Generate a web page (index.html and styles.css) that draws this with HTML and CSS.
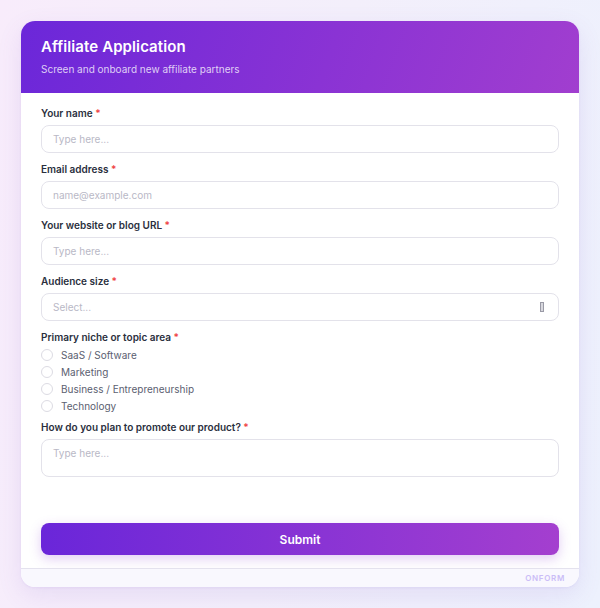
FILE: index.html
```html
<!DOCTYPE html>
<html>
<head>
<meta charset="utf-8">
<link rel="stylesheet" href="styles.css">
</head>
<body>
<div class="card">
  <div class="header">
    <h1 class="title">Affiliate Application</h1>
    <p class="subtitle">Screen and onboard new affiliate partners</p>
  </div>
  <form class="body">
    <div class="field">
      <label class="label">Your name <span class="req">*</span></label>
      <div class="input"><span class="ph">Type here...</span></div>
    </div>
    <div class="field">
      <label class="label">Email address <span class="req">*</span></label>
      <div class="input"><span class="ph">name@example.com</span></div>
    </div>
    <div class="field">
      <label class="label">Your website or blog URL <span class="req">*</span></label>
      <div class="input"><span class="ph">Type here...</span></div>
    </div>
    <div class="field">
      <label class="label">Audience size <span class="req">*</span></label>
      <div class="input select"><span class="ph">Select...</span><span class="tofu"></span></div>
    </div>
    <div class="field radios">
      <label class="label">Primary niche or topic area <span class="req">*</span></label>
      <div class="options">
        <div class="opt"><span class="circle"></span>SaaS / Software</div>
        <div class="opt"><span class="circle"></span>Marketing</div>
        <div class="opt"><span class="circle"></span>Business / Entrepreneurship</div>
        <div class="opt"><span class="circle"></span>Technology</div>
      </div>
    </div>
    <div class="field">
      <label class="label">How do you plan to promote our product? <span class="req">*</span></label>
      <div class="input textarea"><span class="ph">Type here...</span></div>
    </div>
    <button type="button" class="submit">Submit</button>
  </form>
  <div class="footer"><span class="brand">ONFORM</span></div>
</div>
</body>
</html>
```
FILE: styles.css
```css
* { box-sizing: border-box; }
html, body { margin: 0; height: 100%; }
body {
  width: 600px;
  height: 608px;
  font-family: Inter, "Noto Sans", sans-serif;
  background: linear-gradient(100deg, #f8ecfb 0%, #f3effb 50%, #edf1fd 100%);
  padding: 21px 21px 0 21px;
}
.card {
  width: 558px;
  height: 566px;
  background: #fff;
  border-radius: 14px;
  overflow: hidden;
  display: flex;
  flex-direction: column;
  box-shadow: 0 8px 24px rgba(120, 80, 200, 0.12), 0 1px 3px rgba(120, 80, 200, 0.08);
}
.header {
  height: 72px;
  background: linear-gradient(110deg, #6b27d9 0%, #8a33d4 55%, #a13ecf 100%);
  padding: 16px 20px 0 20px;
  color: #fff;
}
.title {
  margin: 0;
  font-size: 15px;
  font-weight: 600;
  line-height: 20px;
  letter-spacing: 0.1px;
}
.subtitle {
  margin: 5px 0 0 0;
  font-size: 10px;
  line-height: 14px;
  color: rgba(255, 255, 255, 0.78);
}
.body {
  flex: 1;
  padding: 13px 20px 13px 20px;
  display: flex;
  flex-direction: column;
  margin: 0;
}
.field { display: flex; flex-direction: column; margin-bottom: 9px; }
.label {
  font-size: 10px;
  line-height: 14px;
  font-weight: 600;
  color: #2a2f3d;
  margin-bottom: 5px;
}
.req { color: #ef4444; }
.input {
  height: 28px;
  border: 1.5px solid #e3e2ea;
  border-radius: 8px;
  padding: 0 11px;
  display: flex;
  align-items: center;
  justify-content: space-between;
}
.ph { font-size: 10px; color: #b9b8c6; }
.textarea { height: 38px; align-items: flex-start; padding-top: 7px; }
.tofu {
  width: 4px;
  height: 10px;
  border: 1px solid #9a9aa6;
  background: #d8d8de;
  margin-right: 3px;
}
.radios { margin-bottom: 6px; }
.radios .label { margin-bottom: 2px; }
.options { display: flex; flex-direction: column; }
.opt {
  height: 17px;
  display: flex;
  align-items: center;
  font-size: 10px;
  color: #5b6070;
}
.circle {
  width: 12px;
  height: 12px;
  border: 1.5px solid #dcdbe3;
  border-radius: 50%;
  margin-right: 8px;
  background: #fff;
}
.submit {
  margin-top: auto;
  height: 32px;
  border: none;
  border-radius: 8px;
  background: linear-gradient(90deg, #6a26d9 0%, #8a34d4 55%, #a43fcf 100%);
  color: #fff;
  font-family: Inter, "Noto Sans", sans-serif;
  font-size: 12px;
  font-weight: 600;
  box-shadow: 0 4px 12px rgba(140, 60, 210, 0.25);
}
.footer {
  height: 19px;
  border-top: 1px solid #e4e2ee;
  background: #f9f8fe;
  display: flex;
  align-items: center;
  justify-content: flex-end;
  padding-right: 14px;
}
.brand {
  font-size: 8px;
  font-weight: 600;
  letter-spacing: 0.7px;
  color: #cbbdf7;
}
```
